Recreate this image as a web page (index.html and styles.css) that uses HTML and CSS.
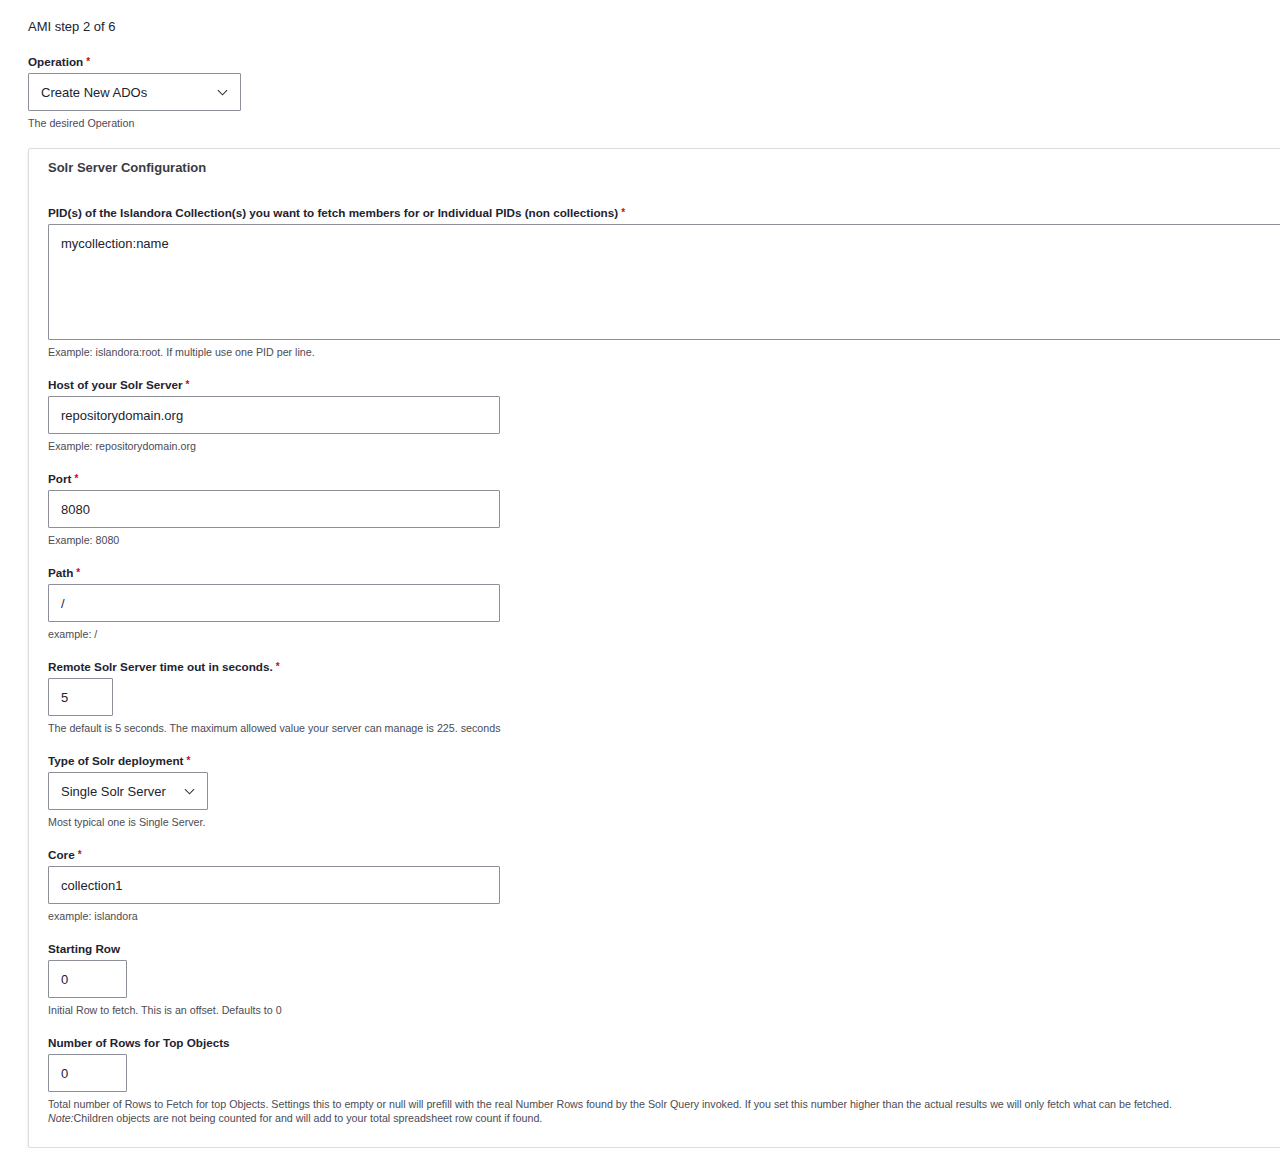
FILE: index.html
```html
<!DOCTYPE html>
<html lang="en">
<head>
    <meta charset="UTF-8">
    <meta name="viewport" content="width=device-width, initial-scale=1.0">
    <title>AMI step 2 of 6</title>
    <link rel="stylesheet" href="styles.css">
</head>
<body>
    <form class="ami-form">
        <p class="step">AMI step 2 of 6</p>

        <!-- Operation -->
        <div class="form-item">
            <label class="form-label required" for="op">Operation</label>
            <div class="select-wrap select-op">
                <select id="op" class="form-select">
                    <option>Create New ADOs</option>
                </select>
                <svg class="chevron" viewBox="0 0 12 7" width="11" height="7"><path d="M1 1l5 5 5-5" fill="none" stroke="#333" stroke-width="1.2"/></svg>
            </div>
            <div class="description">The desired Operation</div>
        </div>

        <!-- Solr Server Configuration -->
        <div class="fieldset">
            <div class="fieldset-title">Solr Server Configuration</div>

            <div class="form-item">
                <label class="form-label required" for="pids">PID(s) of the Islandora Collection(s) you want to fetch members for or Individual PIDs (non collections)</label>
                <textarea id="pids" class="form-textarea">mycollection:name</textarea>
                <div class="description">Example: islandora:root. If multiple use one PID per line.</div>
            </div>

            <div class="form-item">
                <label class="form-label required" for="host">Host of your Solr Server</label>
                <input id="host" class="form-text" type="text" value="repositorydomain.org">
                <div class="description">Example: repositorydomain.org</div>
            </div>

            <div class="form-item">
                <label class="form-label required" for="port">Port</label>
                <input id="port" class="form-text" type="text" value="8080">
                <div class="description">Example: 8080</div>
            </div>

            <div class="form-item">
                <label class="form-label required" for="path">Path</label>
                <input id="path" class="form-text" type="text" value="/">
                <div class="description">example: /</div>
            </div>

            <div class="form-item">
                <label class="form-label required" for="timeout">Remote Solr Server time out in seconds.</label>
                <input id="timeout" class="form-text size-xs" type="text" value="5">
                <div class="description">The default is 5 seconds. The maximum allowed value your server can manage is 225. seconds</div>
            </div>

            <div class="form-item">
                <label class="form-label required" for="type">Type of Solr deployment</label>
                <div class="select-wrap select-type">
                    <select id="type" class="form-select">
                        <option>Single Solr Server</option>
                    </select>
                    <svg class="chevron" viewBox="0 0 12 7" width="11" height="7"><path d="M1 1l5 5 5-5" fill="none" stroke="#333" stroke-width="1.2"/></svg>
                </div>
                <div class="description">Most typical one is Single Server.</div>
            </div>

            <div class="form-item">
                <label class="form-label required" for="core">Core</label>
                <input id="core" class="form-text" type="text" value="collection1">
                <div class="description">example: islandora</div>
            </div>

            <div class="form-item">
                <label class="form-label" for="start">Starting Row</label>
                <input id="start" class="form-text size-sm" type="text" value="0">
                <div class="description">Initial Row to fetch. This is an offset. Defaults to 0</div>
            </div>

            <div class="form-item last">
                <label class="form-label" for="rows">Number of Rows for Top Objects</label>
                <input id="rows" class="form-text size-sm" type="text" value="0">
                <div class="description">Total number of Rows to Fetch for top Objects. Settings this to empty or null will prefill with the real Number Rows found by the Solr Query invoked. If you set this number higher than the actual results we will only fetch what can be fetched.<br><em>Note:</em>Children objects are not being counted for and will add to your total spreadsheet row count if found.</div>
            </div>
        </div>
    </form>
</body>
</html>
```

FILE: styles.css
```css
/* Reset */
* {
    margin: 0;
    padding: 0;
    box-sizing: border-box;
}

html,
body {
    overflow: hidden;
}

body {
    font-family: "Liberation Sans", Arial, sans-serif;
    color: #222330;
    background: #fff;
    padding: 18px 0 0 28px;
}

.ami-form {
    width: 1320px;
}

.step {
    font-size: 13px;
    line-height: 18px;
    margin-bottom: 18px;
}

/* Form items */
.form-item {
    margin-bottom: 18px;
}

.form-item.last {
    margin-bottom: 0;
}

.form-label {
    display: block;
    font-size: 11.7px;
    font-weight: 700;
    line-height: 16px;
    margin-bottom: 3px;
}

.form-label.required::after {
    content: "*";
    color: #c6081f;
    margin-left: 3px;
    font-size: 10px;
    vertical-align: top;
}

.description {
    font-size: 10.7px;
    line-height: 14px;
    color: #4b4c55;
    margin-top: 5px;
}

.form-text,
.form-select,
.form-textarea {
    font-family: inherit;
    font-size: 13px;
    color: #222330;
    background: #fff;
    border: 1px solid #8e9099;
    border-radius: 1px;
    outline: none;
}

.form-text {
    display: block;
    width: 452px;
    height: 38px;
    padding: 0 12px;
}

.form-text.size-xs {
    width: 65px;
}

.form-text.size-sm {
    width: 79px;
}

.form-textarea {
    display: block;
    width: 100%;
    height: 116px;
    padding: 11px 12px;
    line-height: 16px;
    resize: none;
}

/* Select with chevron */
.select-wrap {
    position: relative;
}

.select-op {
    width: 213px;
}

.select-type {
    width: 160px;
}

.form-select {
    display: block;
    width: 100%;
    height: 38px;
    padding: 0 12px;
    appearance: none;
    -webkit-appearance: none;
}

.chevron {
    position: absolute;
    right: 13px;
    top: 16px;
    pointer-events: none;
}

/* Fieldset */
.fieldset {
    border: 1px solid #dcdde2;
    border-radius: 2px;
    box-shadow: 0 2px 3px rgba(0, 0, 0, 0.1);
    padding: 10px 19px 22px;
}

.fieldset-title {
    font-size: 13px;
    font-weight: 700;
    line-height: 18px;
    color: #3a3b44;
    margin-bottom: 28px;
}
```
